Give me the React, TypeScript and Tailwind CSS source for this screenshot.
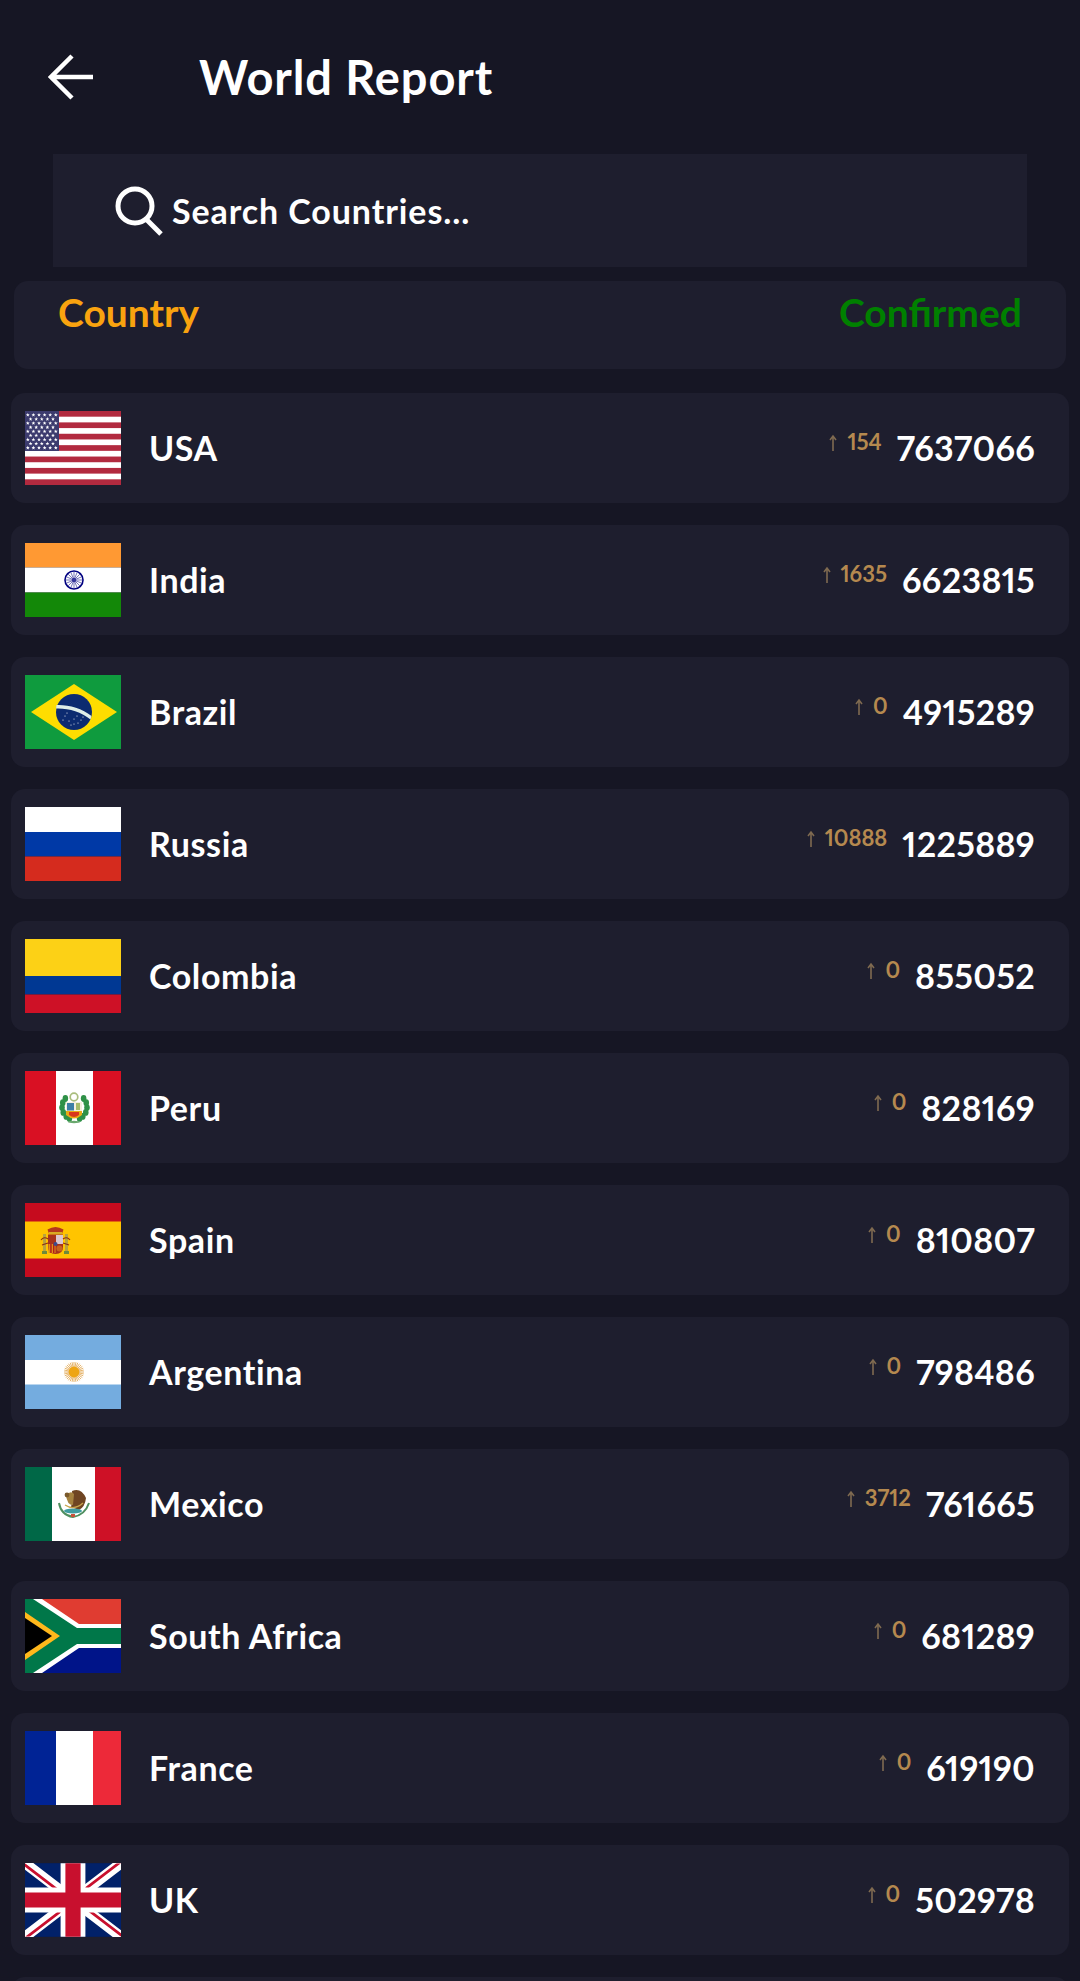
import React from "react";

const Star = ({ x, y, r, fill = "#fff" }: { x: number; y: number; r: number; fill?: string }) => {
  const pts: string[] = [];
  for (let i = 0; i < 10; i++) {
    const a = -Math.PI / 2 + (i * Math.PI) / 5;
    const rr = i % 2 === 0 ? r : r * 0.42;
    pts.push(`${x + rr * Math.cos(a)},${y + rr * Math.sin(a)}`);
  }
  return <polygon points={pts.join(" ")} fill={fill} />;
};

const FlagSvg = ({ children }: { children: React.ReactNode }) => (
  <svg viewBox="0 0 96 74" className="w-[96px] h-[74px] shrink-0 block">
    {children}
  </svg>
);

const USA = () => {
  const stars: React.ReactNode[] = [];
  for (let r = 0; r < 9; r++) {
    const n = r % 2 === 0 ? 6 : 5;
    for (let c = 0; c < n; c++) {
      stars.push(<Star key={`${r}-${c}`} x={(r % 2 === 0 ? 2.8 : 5.6) + c * 5.6} y={4 + r * 4.1} r={2} />);
    }
  }
  return (
    <FlagSvg>
      <rect width="96" height="74" fill="#fff" />
      {[0, 2, 4, 6, 8, 10, 12].map((i) => (
        <rect key={i} y={(i * 74) / 13} width="96" height={74 / 13} fill="#b22a3f" />
      ))}
      <rect width="34" height="40" fill="#3c3b6e" />
      {stars}
    </FlagSvg>
  );
};

const India = () => {
  const spokes = Array.from({ length: 16 }, (_, i) => (i * Math.PI) / 8);
  return (
    <FlagSvg>
      <rect width="96" height="24.5" fill="#ff9933" />
      <rect y="24.5" width="96" height="25" fill="#fff" />
      <rect y="49.5" width="96" height="24.5" fill="#138808" />
      <circle cx="49" cy="37" r="9" fill="none" stroke="#000080" strokeWidth="1.6" />
      <circle cx="49" cy="37" r="2" fill="#000080" />
      {spokes.map((a, i) => (
        <line key={i} x1="49" y1="37" x2={49 + 8.4 * Math.cos(a)} y2={37 + 8.4 * Math.sin(a)} stroke="#3a3a9c" strokeWidth="0.7" />
      ))}
    </FlagSvg>
  );
};

const Brazil = () => (
  <FlagSvg>
    <rect width="96" height="74" fill="#0f9b3e" />
    <polygon points="49,9 92,37 49,65 6,37" fill="#fedd00" />
    <circle cx="49" cy="37" r="18" fill="#0c2b70" />
    <path d="M31.5 30 C 43 29.5, 57 33, 66.5 41 L 65.5 44.5 C 56 36.5, 43 33, 31 33.5 Z" fill="#dfeee8" />
    {[
      [40, 41], [44, 46], [49, 44], [53, 48], [46, 50], [56, 45], [38, 45], [58, 42], [49, 49], [42, 38], [52, 41],
    ].map(([x, y], i) => (
      <circle key={i} cx={x} cy={y} r="0.55" fill="#fff" />
    ))}
  </FlagSvg>
);

const Tri = ({ a, b, c }: { a: string; b: string; c: string }) => (
  <FlagSvg>
    <rect width="96" height="25" fill={a} />
    <rect y="25" width="96" height="24.5" fill={b} />
    <rect y="49.5" width="96" height="24.5" fill={c} />
  </FlagSvg>
);

const Vert = ({ a, b, c, children }: { a: string; b: string; c: string; children?: React.ReactNode }) => (
  <FlagSvg>
    <rect width="31" height="74" fill={a} />
    <rect x="31" width="37" height="74" fill={b} />
    <rect x="68" width="28" height="74" fill={c} />
    {children}
  </FlagSvg>
);

const Colombia = () => (
  <FlagSvg>
    <rect width="96" height="37" fill="#fcd116" />
    <rect y="37" width="96" height="18.5" fill="#003893" />
    <rect y="55.5" width="96" height="18.5" fill="#ce1126" />
  </FlagSvg>
);

const Peru = () => (
  <Vert a="#d91023" b="#fff" c="#d91023">
    {[-1, 1].map((s) =>
      [-0.75, -0.35, 0.05, 0.45, 0.85, 1.15].map((a, i) => (
        <ellipse key={`${s}-${i}`} cx={49.5 + s * 12.5 * Math.cos(a)} cy={36 + 12.5 * Math.sin(a)} rx="2.8" ry="3.4" fill="#2f9147" />
      ))
    )}
    <circle cx="49" cy="26" r="3.8" fill="none" stroke="#a9bd7d" strokeWidth="1.7" />
    <rect x="41" y="31" width="16" height="9" fill="#f4f0df" />
    <rect x="42" y="32" width="7" height="7.5" fill="#3d7fa6" />
    <path d="M51 32 h4 v7 h-4 z" fill="#a7bd6a" />
    <path d="M41 40 H57 V44 Q49 51 41 44 Z" fill="#e8ab16" />
    <path d="M44 41 H54 V44 Q49 48 44 44 Z" fill="#d9361c" />
    <ellipse cx="49" cy="51" rx="6" ry="1.2" fill="#6aa86e" />
  </Vert>
);

const Spain = () => (
  <FlagSvg>
    <rect width="96" height="74" fill="#c60b1e" />
    <rect y="18.5" width="96" height="37" fill="#ffc400" />
    <rect x="18" y="31" width="3" height="17" fill="#b9a23e" />
    <rect x="40" y="31" width="3" height="17" fill="#b9a23e" />
    <rect x="17" y="48" width="5" height="3" fill="#6f8a3a" />
    <rect x="39" y="48" width="5" height="3" fill="#6f8a3a" />
    <path d="M24 31 L22.5 26.5 Q30.5 21.5 38.5 26.5 L37 31 Z" fill="#b5361c" />
    <rect x="24" y="29" width="13" height="2.4" fill="#d8a923" />
    <path d="M23 31.5 H38 V44 Q38 51 30.5 51 Q23 51 23 44 Z" fill="#a8321c" />
    <rect x="31" y="32" width="7" height="9" fill="#dcc6cf" />
    <rect x="23.5" y="41" width="7" height="9" fill="#e0901a" />
    <rect x="25.2" y="41" width="1.5" height="9" fill="#b31f1a" />
    <rect x="28" y="41" width="1.5" height="9" fill="#b31f1a" />
    <circle cx="34.5" cy="45.5" r="3" fill="#c8641e" />
    <circle cx="30.5" cy="41" r="2" fill="#3d4a8c" />
    <path d="M16 37 Q19 33 23 36 M45 37 Q42 33 38 36 M17 42 L23 40 M44 42 L38 40" stroke="#8c2e16" strokeWidth="1.1" fill="none" />
  </FlagSvg>
);

const Argentina = () => (
  <FlagSvg>
    <rect width="96" height="74" fill="#74acdf" />
    <rect y="25" width="96" height="24.5" fill="#fff" />
    {Array.from({ length: 32 }, (_, i) => {
      const a = (i * Math.PI) / 16;
      return (
        <line key={i} x1="49" y1="37" x2={49 + 10 * Math.cos(a)} y2={37 + 10 * Math.sin(a)} stroke="#e3ad5c" strokeWidth="0.9" />
      );
    })}
    <circle cx="49" cy="37" r="5.4" fill="#eea513" />
  </FlagSvg>
);

const Mexico = () => (
  <FlagSvg>
    <rect width="27" height="74" fill="#006847" />
    <rect x="27" width="43" height="74" fill="#fff" />
    <rect x="70" width="26" height="74" fill="#ce1126" />
    <path d="M34 36 Q36 48 48 50 Q60 48 64 36" stroke="#4f8f5f" strokeWidth="2" fill="none" />
    <path d="M47 24 Q56 20 61 31 Q60 40 54 43 L46 40 Q48 33 47 24 Z" fill="#6f4522" />
    <path d="M41 28 Q46 23 49 27 L48 38 Q42 38 41 28 Z" fill="#a5823f" />
    <circle cx="42" cy="28" r="2.4" fill="#7a5a2c" />
    <ellipse cx="48" cy="44" rx="9" ry="2.6" fill="#3f9ca0" />
    <path d="M40 38 Q49 44 58 36" stroke="#c8a34b" strokeWidth="1.3" fill="none" />
    <rect x="46" y="47" width="4" height="3" fill="#c9503a" />
  </FlagSvg>
);

const SouthAfrica = () => (
  <FlagSvg>
    <rect width="96" height="37" fill="#e03c31" />
    <rect y="37" width="96" height="37" fill="#001489" />
    <path d="M8 0 H17 L54 25 H96 V49 H54 L17 74 H8 Z" fill="#fff" />
    <path d="M0 0 H8 L52 29 H96 V45 H52 L8 74 H0 Z" fill="#007749" />
    <path d="M0 13 L35 37 L0 61 Z" fill="#ffb81c" />
    <path d="M0 19 L27 37 L0 55 Z" fill="#000" />
  </FlagSvg>
);

const France = () => <Vert a="#002395" b="#fff" c="#ed2939" />;

const UK = () => (
  <svg viewBox="0 0 60 46" className="w-[96px] h-[74px] shrink-0 block">
    <defs>
      <clipPath id="uk-t">
        <path d="M30 23 H60 V46 Z V46 H0 Z H0 V0 Z V0 H60 Z" />
      </clipPath>
    </defs>
    <rect width="60" height="46" fill="#012169" />
    <path d="M0 0 L60 46 M60 0 L0 46" stroke="#fff" strokeWidth="6.5" />
    <path d="M0 0 L60 46 M60 0 L0 46" stroke="#c8102e" strokeWidth="3.4" clipPath="url(#uk-t)" />
    <path d="M30 0 V46 M0 23 H60" stroke="#fff" strokeWidth="15.5" />
    <path d="M30 0 V46 M0 23 H60" stroke="#c8102e" strokeWidth="9.5" />
  </svg>
);

const rows: { name: string; delta: string; total: string; flag: React.ReactNode }[] = [
  { name: "USA", delta: "154", total: "7637066", flag: <USA /> },
  { name: "India", delta: "1635", total: "6623815", flag: <India /> },
  { name: "Brazil", delta: "0", total: "4915289", flag: <Brazil /> },
  { name: "Russia", delta: "10888", total: "1225889", flag: <Tri a="#fff" b="#0039a6" c="#d52b1e" /> },
  { name: "Colombia", delta: "0", total: "855052", flag: <Colombia /> },
  { name: "Peru", delta: "0", total: "828169", flag: <Peru /> },
  { name: "Spain", delta: "0", total: "810807", flag: <Spain /> },
  { name: "Argentina", delta: "0", total: "798486", flag: <Argentina /> },
  { name: "Mexico", delta: "3712", total: "761665", flag: <Mexico /> },
  { name: "South Africa", delta: "0", total: "681289", flag: <SouthAfrica /> },
  { name: "France", delta: "0", total: "619190", flag: <France /> },
  { name: "UK", delta: "0", total: "502978", flag: <UK /> },
];

export default function App() {
  return (
    <div className="w-[1080px] h-[1981px] overflow-hidden bg-[#161624] text-white font-['Lato',sans-serif] font-bold proportional-nums">
      <header className="h-[154px] flex items-center pl-[48px]">
        <svg width="46" height="46" viewBox="0 0 46 46" fill="none" stroke="#fff" strokeWidth="4.5" className="shrink-0">
          <path d="M45 23 H4 M24 2 L3 23 L24 44" />
        </svg>
        <h1 className="ml-[105px] text-[47px] leading-none tracking-[0.9px]">World Report</h1>
      </header>
      <div className="mx-[53px] h-[113px] bg-[#1e1e2e] flex items-center pl-[62px]">
        <svg width="48" height="50" viewBox="0 0 48 50" fill="none" stroke="#fff" strokeWidth="5" className="shrink-0">
          <circle cx="20" cy="20" r="17" />
          <path d="M31 33 L46 48" />
        </svg>
        <span className="ml-[9px] text-[34px] leading-none tracking-[0.9px] whitespace-nowrap">Search Countries...</span>
      </div>
      <div className="mx-[14px] mt-[14px] h-[88px] rounded-[14px] bg-[#1e1e2e] flex justify-between items-start px-[44px] pt-[9px] text-[39px] leading-[44px]">
        <span className="text-[#f9a30f]">Country</span>
        <span className="text-[#008000]">Confirmed</span>
      </div>
      <div className="mx-[11px] mt-[24px] flex flex-col gap-[22px]">
        {rows.map((r) => (
          <div key={r.name} className="h-[110px] shrink-0 rounded-[14px] bg-[#1e1e2e] flex items-center pl-[14px] pr-[34px]">
            {r.flag}
            <span className="ml-[28px] text-[34px] leading-none tracking-[0.6px]">{r.name}</span>
            <svg width="8" height="18" viewBox="0 0 8 18" fill="none" stroke="#7f6a50" strokeWidth="1.6" className="ml-auto mb-[10px] shrink-0">
              <path d="M4 17 V2 M1 6 L4 2 L7 6" />
            </svg>
            <span className="ml-[10px] mb-[12px] text-[#b5894f] text-[22px] leading-none">{r.delta}</span>
            <span className="ml-[15px] text-[34px] leading-none tracking-[0.3px]">{r.total}</span>
          </div>
        ))}
        <div className="h-[110px] shrink-0 rounded-[14px] bg-[#1e1e2e]" />
      </div>
    </div>
  );
}
